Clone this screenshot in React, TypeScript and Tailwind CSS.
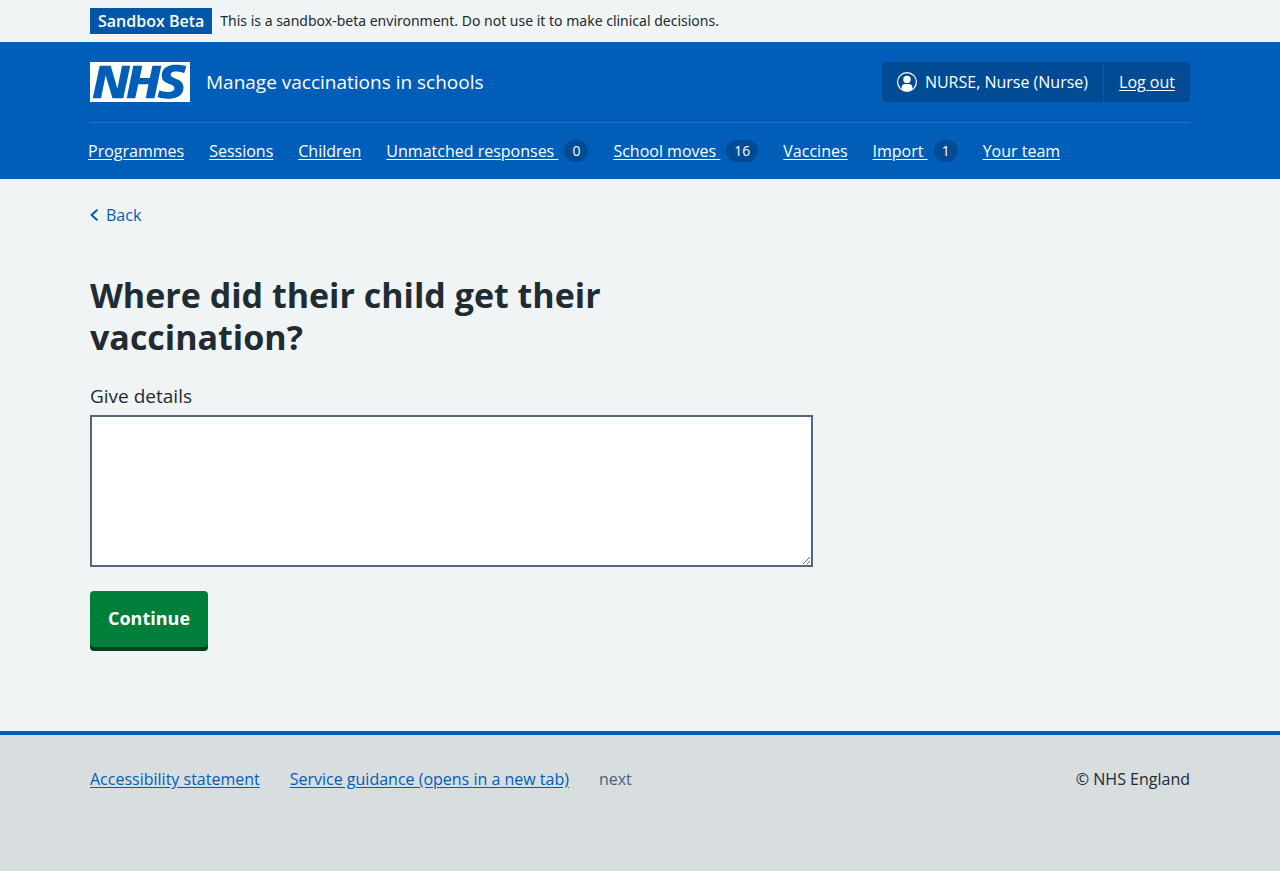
import React from "react";

type NavItem = { label: string; count?: number };

const navItems: NavItem[] = [
  { label: "Programmes" },
  { label: "Sessions" },
  { label: "Children" },
  { label: "Unmatched responses", count: 0 },
  { label: "School moves", count: 16 },
  { label: "Vaccines" },
  { label: "Import", count: 1 },
  { label: "Your team" },
];

function Container({ className = "", children }: { className?: string; children: React.ReactNode }) {
  return (
    <div className="px-8">
      <div className={`mx-auto w-full max-w-[1100px] ${className}`}>{children}</div>
    </div>
  );
}

function NhsLogo() {
  return (
    <svg className="h-10 w-[100px] shrink-0 text-white" viewBox="0 0 200 80" role="img" aria-label="NHS">
      <path
        fill="currentColor"
        d="M200 0v80H0V0h200Zm-27.5 5.5c-14.5 0-29 5-29 22 0 10.2 7.7 13.5 14.7 16.3l.7.3c5.4 2 10.1 3.9 10.1 8.4 0 6.5-8.5 7.5-14 7.5s-12.5-1.5-16-3.5L135 70c5.5 2 13.5 3.5 20 3.5 15.5 0 32-4.5 32-22.5 0-19.5-25.5-16.5-25.5-25.5 0-5.5 5.5-6.5 12.5-6.5a35 35 0 0 1 14.5 3l4-13.5c-4.5-2-12-3-20-3Zm-131 2h-22l-14 65H22l9-45h.5l13.5 45h21.5l14-65H64l-9 45h-.5l-13-45Zm63 0h-18l-13 65h17l6-28H117l-5.5 28H129l13.5-65H125L119.5 32h-20l5-24.5Z"
      />
    </svg>
  );
}

function UserIcon() {
  return (
    <svg className="size-5 shrink-0" viewBox="0 0 20 20" aria-hidden="true">
      <circle cx="10" cy="10" r="9.4" fill="none" stroke="currentColor" strokeWidth="1.2" />
      <circle cx="10" cy="7.4" r="3.7" fill="currentColor" />
      <path fill="currentColor" d="M4.6 17.8v-1.9A3.8 3.8 0 0 1 8.4 12.1h3.2a3.8 3.8 0 0 1 3.8 3.8v1.9A9.4 9.4 0 0 1 10 19.4a9.4 9.4 0 0 1-5.4-1.6Z" />
    </svg>
  );
}

export default function App() {
  return (
    <div className="flex min-h-screen flex-col bg-[#f0f4f5] font-['Open_Sans','Noto_Sans',sans-serif] text-base leading-6 text-[#212b32]">
      <Container className="flex flex-wrap items-center gap-2 py-2">
        <strong className="bg-[#0056a7] px-2 py-px font-semibold text-white">Sandbox Beta</strong>
        <span className="font-['Noto_Sans',sans-serif] text-sm leading-6">
          This is a sandbox-beta environment. Do not use it to make clinical decisions.
        </span>
      </Container>

      <header className="bg-[#005eb8] text-white">
        <Container>
          <div className="flex flex-wrap items-center justify-between gap-4 py-5">
            <a href="#" className="flex items-center gap-4 text-[19px] leading-7">
              <NhsLogo />
              <span>Manage vaccinations in schools</span>
            </a>
            <div className="flex h-10 items-center rounded-[3px] bg-[#004b93]">
              <div className="flex h-full items-center gap-2 border-r border-[#005eb8] px-[15px]">
                <UserIcon />
                <span>NURSE, Nurse (Nurse)</span>
              </div>
              <a href="#" className="px-[15px] underline underline-offset-2">
                Log out
              </a>
            </div>
          </div>
          <nav aria-label="Main" className="border-t border-[#346fbd] py-4">
            <ul className="-ml-0.5 flex flex-wrap gap-x-[25px]">
              {navItems.map((item) => (
                <li key={item.label}>
                  <a href="#" className="flex items-center gap-1.5">
                    <span className="whitespace-pre underline underline-offset-2">
                      {item.count === undefined ? item.label : `${item.label} `}
                    </span>
                    {item.count !== undefined && (
                      <span className="rounded-full bg-[#004b93] px-2 text-sm leading-[22px]">{item.count}</span>
                    )}
                  </a>
                </li>
              ))}
            </ul>
          </nav>
        </Container>
      </header>

      <Container>
        <a href="#" className="mt-6 inline-flex items-center gap-2 text-[#005eb8]">
          <svg className="h-3 w-2" viewBox="0 0 8 12" fill="none" stroke="currentColor" strokeWidth="2" strokeLinecap="round" strokeLinejoin="round" aria-hidden="true">
            <path d="M6.8 1.2 1.5 6l5.3 4.8" />
          </svg>
          Back
        </a>
      </Container>

      <Container>
        <main className="w-full pt-[47px] pb-20 md:w-[723px]">
          <form onSubmit={(e) => e.preventDefault()}>
            <h1 className="text-[34px] leading-[42px] font-bold">Where did their child get their vaccination?</h1>
            <label htmlFor="details" className="mt-6 block text-[19px] leading-7">
              Give details
            </label>
            <textarea
              id="details"
              rows={5}
              className="mt-[5px] block h-[152px] w-full resize-y border-2 border-[#56667a] bg-white p-1 text-[19px] leading-7"
            />
            <button
              type="submit"
              className="mt-6 mb-1 block rounded bg-[#007f3b] px-[18px] pt-[13px] pb-[15px] text-lg leading-7 font-bold text-white shadow-[0_4px_0_#00401e]"
            >
              Continue
            </button>
          </form>
        </main>
      </Container>

      <footer className="grow border-t-4 border-[#005eb8] bg-[#d8dde0] py-8">
        <Container className="flex flex-wrap justify-between gap-4">
          <ul className="flex flex-wrap gap-x-[30px] text-[#005eb8]">
            <li>
              <a href="#" className="underline underline-offset-2">Accessibility statement</a>
            </li>
            <li>
              <a href="#" className="underline underline-offset-2">Service guidance (opens in a new tab)</a>
            </li>
            <li className="text-[#4c6272]">next</li>
          </ul>
          <p>© NHS England</p>
        </Container>
      </footer>
    </div>
  );
}
